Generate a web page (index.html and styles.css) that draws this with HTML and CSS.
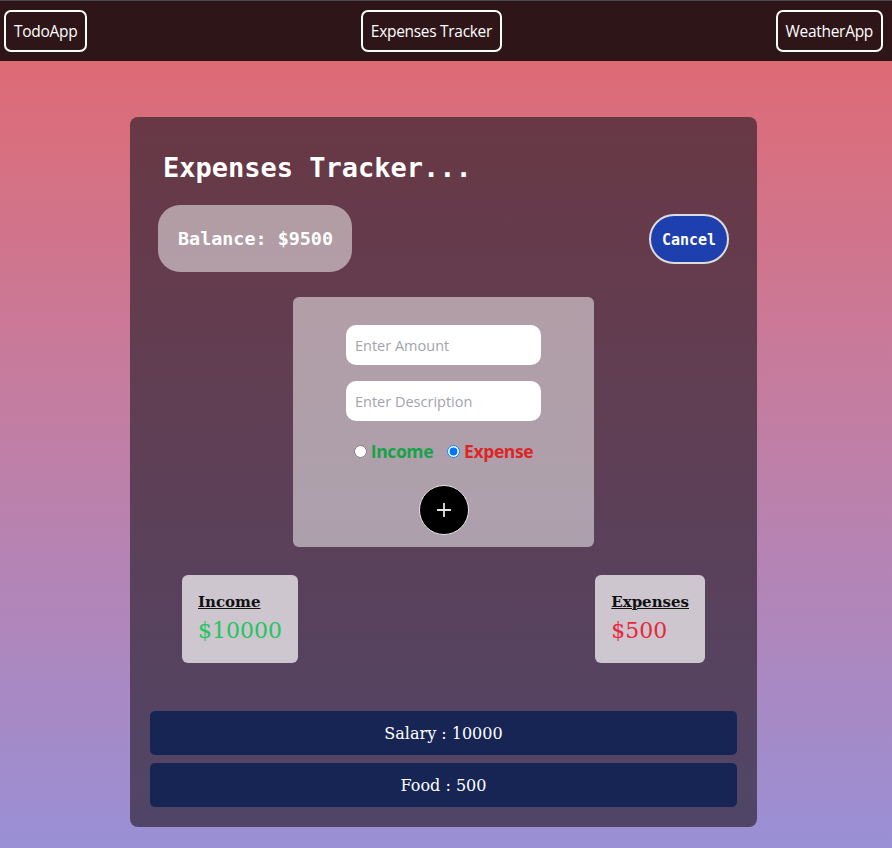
FILE: index.html
```html
<!DOCTYPE html>
<html lang="en">
<head>
<meta charset="utf-8">
<title>Expenses Tracker</title>
<link rel="stylesheet" href="styles.css">
</head>
<body>
<nav class="nav">
  <button class="nav-btn">TodoApp</button>
  <button class="nav-btn">Expenses Tracker</button>
  <button class="nav-btn">WeatherApp</button>
</nav>
<main class="card">
  <h1 class="title">Expenses Tracker...</h1>
  <div class="top-row">
    <div class="balance">Balance: $9500</div>
    <button class="cancel">Cancel</button>
  </div>
  <form class="form-box">
    <input class="field" type="text" placeholder="Enter Amount">
    <input class="field" type="text" placeholder="Enter Description">
    <div class="radios">
      <label class="radio-label income-label"><input type="radio" name="type"> Income</label>
      <label class="radio-label expense-label"><input type="radio" name="type" checked> Expense</label>
    </div>
    <button type="button" class="add-btn"><svg width="18" height="18" viewBox="0 0 18 18"><path d="M9 2v14M2 9h14" stroke="#e5e5e5" stroke-width="1.8" fill="none"/></svg></button>
  </form>
  <div class="summary">
    <div class="sum-card">
      <div class="sum-title">Income</div>
      <div class="sum-value income-value">$10000</div>
    </div>
    <div class="sum-card">
      <div class="sum-title">Expenses</div>
      <div class="sum-value expense-value">$500</div>
    </div>
  </div>
  <ul class="list">
    <li class="item">Salary : 10000</li>
    <li class="item">Food : 500</li>
  </ul>
</main>
</body>
</html>
```
FILE: styles.css
```css
* { box-sizing: border-box; }
html, body { margin: 0; padding: 0; }
body {
  min-height: 100vh;
  background: linear-gradient(180deg, #e2676d 0%, #c97a99 40%, #9a90d6 100%);
  font-family: "Open Sans", "Noto Sans", sans-serif;
  padding-bottom: 21px;
}
.nav {
  height: 61px;
  background: #2e1517;
  border-top: 1px solid #4a4a4a;
  display: flex;
  align-items: center;
  justify-content: space-between;
  padding: 0 9px 0 4px;
}
.nav-btn {
  height: 42px;
  background: transparent;
  border: 2px solid #fff;
  border-radius: 7px;
  color: #fff;
  font-family: "Open Sans", sans-serif;
  font-size: 15.5px;
  padding: 0 8px;
  letter-spacing: -0.3px;
}
.card {
  width: 627px;
  margin: 56px 0 0 130px;
  background: rgba(33, 23, 34, 0.61);
  border-radius: 8px;
  padding: 20px 20px 20px;
}
.title {
  margin: 15px 0 0 13px;
  font-family: "DejaVu Sans Mono", monospace;
  font-size: 27px;
  font-weight: bold;
  color: #fff;
  line-height: 31px;
}
.top-row {
  margin-top: 22px;
  padding: 0 8px;
  display: flex;
  align-items: center;
  justify-content: space-between;
}
.balance {
  height: 67px;
  padding: 0 19px 0 20px;
  display: flex;
  align-items: center;
  background: rgba(255, 255, 255, 0.5);
  border-radius: 22px;
  font-family: "DejaVu Sans Mono", monospace;
  font-weight: bold;
  font-size: 18.4px;
  color: #fff;
}
.cancel {
  width: 80px;
  height: 50px;
  border-radius: 25px;
  background: #1e40af;
  border: 2px solid #dcdcdc;
  color: #fff;
  font-family: "DejaVu Sans Mono", monospace;
  font-weight: bold;
  font-size: 15px;
  padding: 3px 0 0;
}
.form-box {
  width: 301px;
  height: 250px;
  margin: 25px auto 0;
  background: rgba(255, 255, 255, 0.5);
  border-radius: 6px;
  display: flex;
  flex-direction: column;
  align-items: center;
  padding-top: 28px;
}
.field {
  width: 195px;
  height: 40px;
  border: none;
  border-radius: 10px;
  background: #fff;
  padding: 0 9px;
  font-family: "Open Sans", sans-serif;
  font-size: 14.5px;
  outline: none;
}
.field + .field { margin-top: 16px; }
.field::placeholder { color: #a3a3ae; }
.radios {
  margin-top: 19px;
  height: 22px;
  display: flex;
  align-items: center;
  gap: 14px;
}
.radio-label {
  display: flex;
  align-items: center;
  font-family: "Open Sans", sans-serif;
  font-weight: bold;
  font-size: 17.5px;
  letter-spacing: -0.4px;
}
.radio-label input { margin: 0 4px 0 0; width: 13px; height: 13px; }
.income-label { color: #16a34a; }
.expense-label { color: #dc2626; }
.add-btn {
  margin-top: 23px;
  width: 50px;
  height: 50px;
  border-radius: 50%;
  background: #000;
  border: 1px solid #e8e8e8;
  display: flex;
  align-items: center;
  justify-content: center;
  padding: 0;
}
.summary {
  margin-top: 28px;
  padding: 0 32px;
  display: flex;
  justify-content: space-between;
}
.sum-card {
  height: 88px;
  background: rgba(255, 255, 255, 0.7);
  border-radius: 6px;
  padding: 17px 16px 0 16px;
  font-family: "DejaVu Serif", serif;
}
.sum-title {
  font-weight: bold;
  font-size: 15px;
  text-decoration: underline;
  color: #111;
  line-height: 20px;
}
.sum-value {
  font-size: 22px;
  margin-top: 5px;
  line-height: 28px;
}
.income-value { color: #22c55e; }
.expense-value { color: #e5283a; }
.list {
  list-style: none;
  margin: 48px 0 0;
  padding: 0;
  display: flex;
  flex-direction: column;
  gap: 8px;
}
.item {
  height: 44px;
  background: #172554;
  border-radius: 5px;
  color: #fff;
  font-family: "DejaVu Serif", serif;
  font-size: 16px;
  display: flex;
  align-items: center;
  justify-content: center;
}
```
